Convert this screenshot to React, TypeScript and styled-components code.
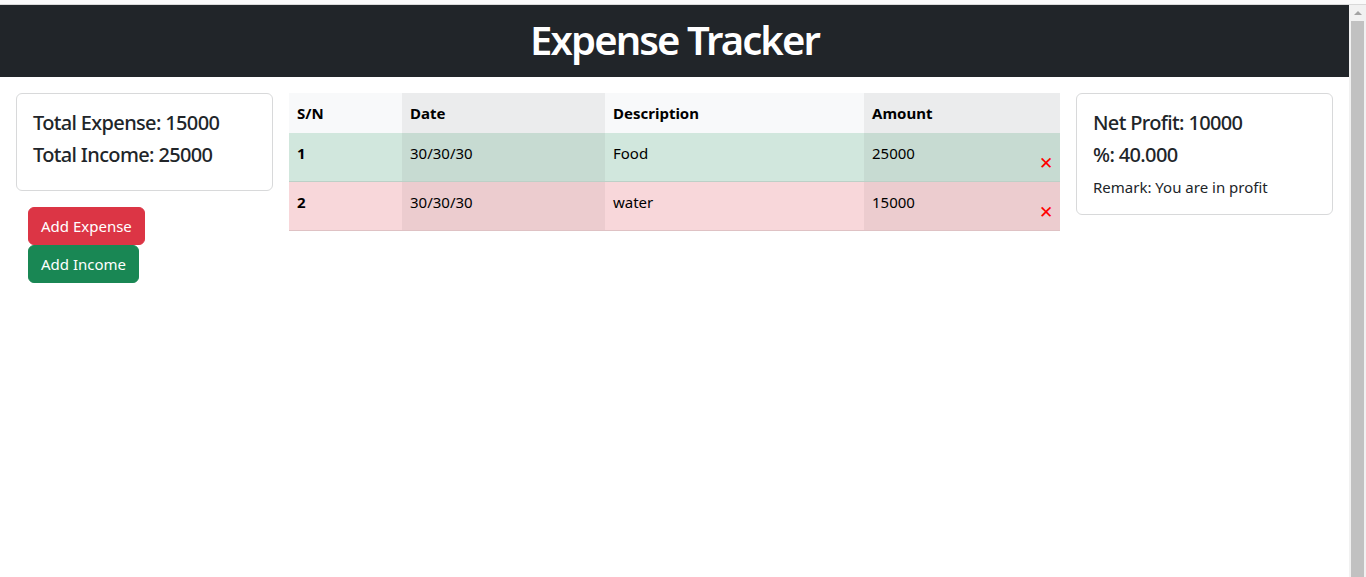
import styled, { createGlobalStyle } from 'styled-components'

const GlobalStyle = createGlobalStyle`
  html, body {
    margin: 0;
    padding: 0;
    height: 100%;
    overflow: hidden;
  }
  body {
    font-family: "Noto Sans", "Open Sans", sans-serif;
    font-size: 16px;
    line-height: 1.5;
    color: #212529;
    background: #fff;
  }
  * {
    box-sizing: border-box;
  }
`

// outer frame: thin browser edge on top, then the page and its scrollbar
const Frame = styled.div`
  height: 577px;
  display: flex;
  flex-direction: column;
  border-top: 4px solid #fafafa;
`

const Edge = styled.div`
  height: 1px;
  background: #d9d9d9;
  flex: none;
`

const Window = styled.div`
  flex: 1;
  display: flex;
  min-height: 0;
`

const Page = styled.div`
  flex: 1;
  min-width: 0;
  overflow: hidden;
`

const Scrollbar = styled.div`
  width: 17px;
  flex: none;
  background: #f1f1f1;
  display: flex;
  flex-direction: column;
`

const ScrollArrow = styled.div`
  height: 16px;
  display: flex;
  align-items: center;
  justify-content: center;
  &::before {
    content: '';
    border-left: 4px solid transparent;
    border-right: 4px solid transparent;
    border-bottom: 4px solid #a3a3a3;
  }
`

const ScrollThumb = styled.div`
  flex: 1;
  margin: 0 2px;
  background: #c1c1c1;
`

const Header = styled.header`
  height: 72px;
  background: #212529;
  display: flex;
  align-items: center;
  justify-content: center;
  padding-bottom: 3px;
  h1 {
    margin: 0;
    color: #fff;
    font-size: 40px;
    font-weight: 600;
    line-height: 1.2;
    letter-spacing: -1.9px;
  }
`

const Layout = styled.main`
  display: grid;
  grid-template-columns: 257px 1fr 257px;
  gap: 16px;
  padding: 16px;
  align-items: start;
`

const Card = styled.div`
  border: 1px solid #d8d9da;
  border-radius: 6px;
  padding: 17px 16px 15px;
  background: #fff;
`

const Stat = styled.h5`
  margin: 0 0 8px;
  font-size: 20px;
  font-weight: 500;
  line-height: 1.2;
  letter-spacing: -0.65px;
`

const Remark = styled.p`
  margin: 0;
  font-size: 15px;
  line-height: 24px;
`

const ButtonStack = styled.div`
  display: flex;
  flex-direction: column;
  align-items: flex-start;
  margin-top: 16px;
  padding: 0 12px;
`

const Button = styled.button<{ tone: 'danger' | 'success' }>`
  font-family: inherit;
  font-size: 15px;
  line-height: 24px;
  padding: 6px 12px;
  border-radius: 6px;
  color: #fff;
  border: 1px solid ${p => (p.tone === 'danger' ? '#dc3545' : '#198754')};
  background: ${p => (p.tone === 'danger' ? '#dc3545' : '#198754')};
  cursor: pointer;
`

const Table = styled.table`
  width: 100%;
  border-collapse: collapse;
  table-layout: fixed;
  th, td {
    padding: 8px;
    text-align: left;
    vertical-align: top;
    font-size: 15px;
    line-height: 24px;
  }
  thead th {
    background: #f8f9fa;
    font-weight: 700;
    color: #000;
  }
  thead th:nth-child(even) {
    background: #ebeced;
  }
`

const Row = styled.tr<{ tone: 'success' | 'danger' }>`
  border-bottom: 1px solid ${p => (p.tone === 'success' ? '#bdd0c7' : '#dfc2c4')};
  th, td {
    background: ${p => (p.tone === 'success' ? '#d1e7dd' : '#f8d7da')};
    color: #000;
  }
  th {
    font-weight: 700;
  }
  td:nth-child(even) {
    background: ${p => (p.tone === 'success' ? '#c7dbd2' : '#eccccf')};
  }
`

const AmountCell = styled.div`
  display: flex;
  justify-content: space-between;
  align-items: flex-start;
`

const Delete = styled.button`
  height: 33px;
  padding: 12px 0 0;
  margin: 0 -1px -1px 0;
  border: 0;
  background: none;
  color: #ff0000;
  font-size: 17px;
  line-height: 14px;
  cursor: pointer;
`

const rows = [
  { sn: 1, date: '30/30/30', desc: 'Food', amount: 25000, tone: 'success' as const },
  { sn: 2, date: '30/30/30', desc: 'water', amount: 15000, tone: 'danger' as const },
]

export default function App() {
  return (
    <>
      <GlobalStyle />
      <Frame>
        <Edge />
        <Window>
          <Page>
            <Header>
              <h1>Expense Tracker</h1>
            </Header>
            <Layout>
              <div>
                <Card>
                  <Stat>Total Expense: 15000</Stat>
                  <Stat>Total Income: 25000</Stat>
                </Card>
                <ButtonStack>
                  <Button tone="danger">Add Expense</Button>
                  <Button tone="success">Add Income</Button>
                </ButtonStack>
              </div>
              <Table>
                <colgroup>
                  <col style={{ width: 113 }} />
                  <col style={{ width: 203 }} />
                  <col style={{ width: 259 }} />
                  <col />
                </colgroup>
                <thead>
                  <tr>
                    <th>S/N</th>
                    <th>Date</th>
                    <th>Description</th>
                    <th>Amount</th>
                  </tr>
                </thead>
                <tbody>
                  {rows.map(r => (
                    <Row key={r.sn} tone={r.tone}>
                      <th>{r.sn}</th>
                      <td>{r.date}</td>
                      <td>{r.desc}</td>
                      <td>
                        <AmountCell>
                          <span>{r.amount}</span>
                          <Delete>✕</Delete>
                        </AmountCell>
                      </td>
                    </Row>
                  ))}
                </tbody>
              </Table>
              <Card>
                <Stat>Net Profit: 10000</Stat>
                <Stat>%: 40.000</Stat>
                <Remark>Remark: You are in profit</Remark>
              </Card>
            </Layout>
          </Page>
          <Scrollbar>
            <ScrollArrow />
            <ScrollThumb />
          </Scrollbar>
        </Window>
      </Frame>
    </>
  )
}
